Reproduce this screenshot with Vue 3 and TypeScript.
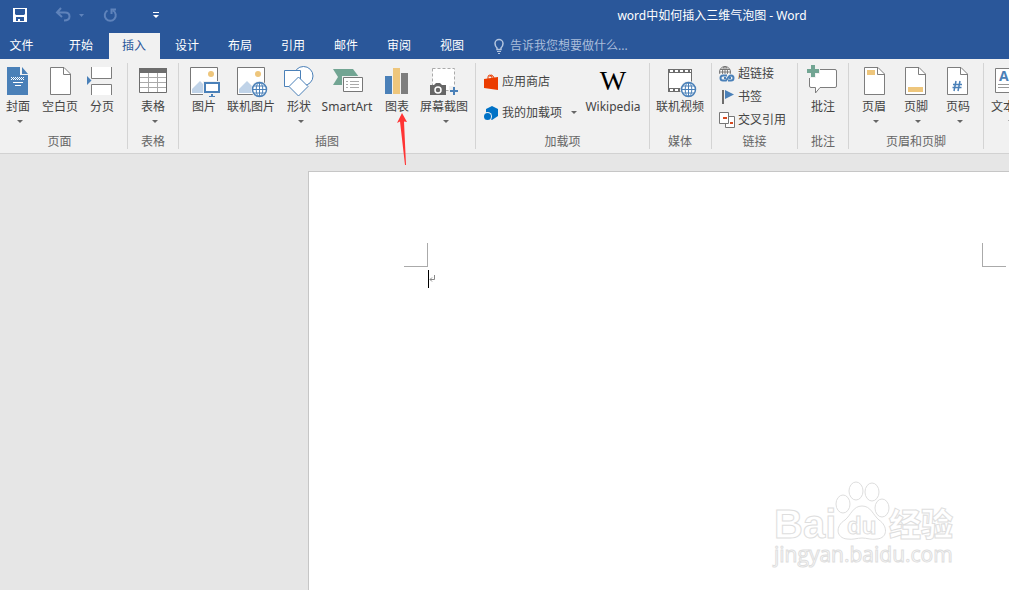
<script setup lang="ts">
import { ref } from 'vue'

interface Command {
  label: string
  icon: string
  width: number
  menu?: boolean
}
interface Group {
  label: string
  kind: string
  big: Command[]
  small: Command[]
}

const tabs: string[] = ['开始', '插入', '设计', '布局', '引用', '邮件', '审阅', '视图']
const activeTab = ref('插入')
const query = ref('')

const big = (label: string, icon: string, width: number, menu = false): Command => ({ label, icon, width, menu })

const groups: Group[] = [
  { label: '页面', kind: 'pages', big: [big('封面', 'cover', 36, true), big('空白页', 'blank', 48), big('分页', 'break', 36)], small: [] },
  { label: '表格', kind: 'single', big: [big('表格', 'table', 48, true)], small: [] },
  {
    label: '插图',
    kind: 'art',
    big: [
      big('图片', 'picture', 36),
      big('联机图片', 'online', 58),
      big('形状', 'shapes', 38, true),
      big('SmartArt', 'smartart', 58),
      big('图表', 'chart', 42),
      big('屏幕截图', 'screenshot', 52, true),
    ],
    small: [],
  },
  {
    label: '加载项',
    kind: 'addins',
    big: [big('Wikipedia', 'wiki', 64)],
    small: [big('应用商店', 'store', 0), big('我的加载项', 'addin', 0, true)],
  },
  { label: '媒体', kind: 'media', big: [big('联机视频', 'video', 58)], small: [] },
  {
    label: '链接',
    kind: 'links',
    big: [],
    small: [big('超链接', 'link', 0), big('书签', 'flag', 0), big('交叉引用', 'cross', 0)],
  },
  { label: '批注', kind: 'single', big: [big('批注', 'comment', 48)], small: [] },
  {
    label: '页眉和页脚',
    kind: 'header',
    big: [big('页眉', 'header', 42, true), big('页脚', 'footer', 42, true), big('页码', 'number', 42, true)],
    small: [],
  },
  { label: '', kind: 'text', big: [big('文本框', 'textbox', 48, true)], small: [] },
]
</script>

<template>
  <div class="app">
    <svg class="defs" aria-hidden="true">
      <defs>
        <g id="i-globe" fill="none" stroke="#4a80b8">
          <circle r="7" fill="#fff" stroke-width="1.5" />
          <ellipse rx="3.3" ry="7" />
          <path d="M0-7V7M-7 0H7M-6-3.5H6M-6 3.5H6" />
        </g>
        <g id="i-page">
          <path d="M.5.5H14L20.5 7V27.5H.5Z" fill="#fff" stroke="#7d7d7d" />
          <path d="M13.5.5V7.5H20.5" fill="none" stroke="#7d7d7d" />
        </g>
        <g id="i-photo">
          <path d="M2.500 1.500H29.500V28.500H2.500Z" fill="#fff" stroke="#777" />
          <circle cx="23" cy="8" r="3" fill="#eec67c" />
          <path d="M4 27V23L12 15L20 23V27Z" fill="#c0d3e8" />
        </g>

        <g id="i-cover">
          <path d="M5 1H18V9H26V29H5Z" fill="#4a80b8" />
          <path d="M20 1V8H26Z" fill="#4a80b8" />
          <path d="M9 11.500H22M9 13.500H22" stroke="#fff" stroke-dasharray="1 1" />
          <path d="M10 12.500H22" stroke="#fff" stroke-dasharray="1 1" />
          <path d="M11 16.500H21M13 19.500H19" stroke="#fff" />
        </g>
        <g id="i-blank"><use href="#i-page" x="6" y="1" /></g>
        <g id="i-break">
          <path d="M5 1H26V12H5ZM5 19H26V29H5Z" fill="#fff" />
          <path d="M5.500 1V12.500H25.500V1M5.500 29V18.500H25.500V29" fill="none" stroke="#7d7d7d" />
          <path d="M1 10L5.500 14.500L1 19Z" fill="#4a80b8" />
        </g>
        <g id="i-table">
          <path d="M2.500 2.500H29.500V26.500H2.500Z" fill="#fff" stroke="#6d6d6d" />
          <path d="M2 2H30V7H2Z" fill="#6d6d6d" />
          <path d="M3 11.500H29M3 16.500H29M3 21.500H29M11.500 7V26M20.500 7V26" stroke="#aaa" />
        </g>
        <g id="i-picture">
          <use href="#i-photo" />
          <path d="M15 15H33V29H15Z" fill="#f1f1f1" />
          <path d="M17 17H31V26H17Z" fill="#fff" stroke="#4a80b8" stroke-width="2" />
          <path d="M23 28H25V30H27V31H21V30H23Z" fill="#4a80b8" />
        </g>
        <g id="i-online">
          <use href="#i-photo" />
          <circle cx="24.500" cy="23.500" r="8.500" fill="#f1f1f1" />
          <use href="#i-globe" x="24.500" y="23.500" />
        </g>
        <g id="i-shapes" fill="#fff" stroke="#4a80b8">
          <circle cx="20.500" cy="10" r="9.500" />
          <path d="M1.500 4.500H17.500V20.500H1.500Z" />
          <path d="M15.500 11L25 20.500L15.500 30L6 20.500Z" />
        </g>
        <g id="i-smartart">
          <path d="M2 3H22L28 11L22 19H2L7 11Z" fill="#72a593" />
          <path d="M11 10H33V28H11Z" fill="#f1f1f1" />
          <path d="M12.500 11.500H31.500V25.500H12.500Z" fill="#fff" stroke="#777" />
          <path d="M15 15.500H17M15 18.500H17M15 21.500H17M19 15.500H28M19 18.500H28M19 21.500H28" stroke="#aaa" />
        </g>
        <g id="i-chart">
          <path d="M4 10H11V28H4Z" fill="#4a80b8" />
          <path d="M12 2H19V28H12Z" fill="#eec67c" />
          <path d="M20 7H27V28H20Z" fill="#7d7d7d" />
        </g>
        <g id="i-screenshot">
          <path d="M4.500 2.500H26.500V24.500H4.500Z" fill="#fff" stroke="#aaa" stroke-dasharray="3 2" />
          <path d="M2 19H6L8 17H12L14 19H18V29H2Z" fill="#666" />
          <circle cx="10" cy="24" r="3" fill="#666" stroke="#fff" stroke-width="1.500" />
          <path d="M21 20H31V30H21Z" fill="#f1f1f1" />
          <path d="M26 21V29M22 25H30" stroke="#4a80b8" stroke-width="2" />
        </g>
        <g id="i-wiki"><text x="16" y="24" text-anchor="middle" class="serif">W</text></g>
        <g id="i-video">
          <path d="M4 3H28V26H4Z" fill="#6d6d6d" />
          <path d="M5 7H27V22H5Z" fill="#fff" />
          <path d="M6 5H27M6 24H27" stroke="#fff" stroke-width="2" stroke-dasharray="3 2" />
          <circle cx="24.500" cy="23.500" r="8.500" fill="#f1f1f1" />
          <use href="#i-globe" x="24.500" y="23.500" />
        </g>
        <g id="i-comment">
          <path d="M4 3.500H28Q29.500 3.500 29.500 5V20Q29.500 21.500 28 21.500H13L8.500 27V21.500H4Q2.500 21.500 2.500 20V5Q2.500 3.500 4 3.500Z" fill="#fff" stroke="#7d7d7d" />
          <path d="M-1-2H13V8H9V12H-1Z" fill="#f1f1f1" />
          <path d="M4-1H8V3H12V7H8V11H4V7H0V3H4Z" fill="#72a593" />
        </g>
        <g id="i-header"><use href="#i-page" x="6" y="1" /><path d="M9 4H17V9H9Z" fill="#eec67c" /></g>
        <g id="i-footer"><use href="#i-page" x="5" y="1" /><path d="M8 21H23V26H8Z" fill="#eec67c" /></g>
        <g id="i-number">
          <use href="#i-page" x="5" y="1" />
          <path d="M14 15L12 25M18 15L16 25M11 18.500H20M10.500 21.500H19.500" fill="none" stroke="#4a80b8" stroke-width="1.500" />
        </g>
        <g id="i-textbox">
          <path d="M2.500 2.500H30V26.500H2.500Z" fill="#fff" stroke="#7d7d7d" />
          <text x="6" y="15" class="letter">A</text>
          <path d="M18 7.500H27M18 11.500H27M5 18.500H27M5 21.500H27" stroke="#999" />
        </g>

        <g id="i-store">
          <path d="M0 5L14 3V16L0 14Z" fill="#eb3c00" />
          <path d="M4 5V3Q4 1 6 1Q8 1 8 4M6 3V2Q7 0 9 2L10 4" fill="none" stroke="#eb3c00" />
        </g>
        <g id="i-addin">
          <path d="M8 1L14 4V11L8 15L2 11V4Z" fill="#0072c6" />
          <circle cx="3.500" cy="11.500" r="4.500" fill="#f1f1f1" />
          <circle cx="3.500" cy="11.500" r="3.500" fill="#0072c6" />
        </g>
        <g id="i-link">
          <g fill="none" stroke="#777"><circle cx="6" cy="6" r="5.500" fill="#fff" /><ellipse cx="6" cy="6" rx="2.500" ry="5.500" /><path d="M0 6H12M1 3.500H11M6 0V12" /></g>
          <path d="M0 8H16V16H0Z" fill="#f1f1f1" />
          <path d="M8 9.500H4Q1.500 9.500 1.500 12T4 14.500H7L10 10.500Q11 9.500 12 9.500Q14.500 9.500 14.500 12T12 14.500H9M5 12H7M10 12H12" fill="none" stroke="#4a80b8" stroke-width="2" />
        </g>
        <g id="i-flag"><path d="M3 1H5V15H3Z" fill="#6d6d6d" /><path d="M6 1L15 5.500L6 10Z" fill="#4a80b8" /></g>
        <g id="i-cross">
          <path d="M6.500 4.500H15.500V15.500H6.500Z" fill="#fff" stroke="#777" />
          <path d="M.500.500H9.500V11.500H.500Z" fill="#fff" stroke="#777" />
          <path d="M4 5H8V7H4ZM11 10H14V12H11Z" fill="#d84a20" />
        </g>
      </defs>
    </svg>

    <header class="titlebar">
      <div class="quick">
        <button class="tool save" aria-label="保存">
          <svg width="14" height="14"><path d="M0 0H14V14H0ZM2 1V6L3 7H11L12 6V1ZM3 9V13H5V11H7V13H11V9Z" fill="#fff" fill-rule="evenodd" /></svg>
        </button>
        <button class="tool undo" aria-label="撤消">
          <svg width="15" height="14"><path d="M5 0L1 4.500L6 9M1 4.500H9Q13.500 4.500 13.500 8.500T8 12.500" fill="none" stroke="#5f83bb" stroke-width="2" /></svg>
        </button>
        <button class="tool more" aria-label="撤消选项">
          <svg width="5" height="3"><path d="M0 0H5L2.500 3Z" fill="#5f83bb" /></svg>
        </button>
        <button class="tool redo" aria-label="重复">
          <svg width="14" height="14"><path d="M9.500 2.500A5.500 5.500 0 1 1 4 2.500M1 1.500H5.500V6" fill="none" stroke="#5f83bb" stroke-width="2" transform="matrix(-1 0 0 1 14 0)" /></svg>
        </button>
        <button class="tool" aria-label="自定义快速访问工具栏">
          <svg width="6" height="6"><path d="M0 0H6V1H0ZM0 3H6L3 6Z" fill="#fff" /></svg>
        </button>
      </div>
      <h1>word中如何插入三维气泡图 - Word</h1>
    </header>

    <nav class="tabs">
      <button class="tab file">文件</button>
      <button v-for="t in tabs" :key="t" class="tab" :class="{ active: t === activeTab }" @click="activeTab = t">{{ t }}</button>
      <label class="tell">
        <svg width="10" height="15" fill="none" stroke="#b4c5df">
          <path d="M3 10.500V9Q1 7 1 4.500A4 4 0 0 1 9 4.500Q9 7 7 9V10.500Z" stroke-width="1.500" />
          <path d="M3 12.500H7M4 14.500H6" />
        </svg>
        <input v-model="query" type="text" placeholder="告诉我您想要做什么..." aria-label="告诉我您想要做什么" />
      </label>
    </nav>

    <section class="ribbon">
      <div v-for="(g, i) in groups" :key="i" class="group" :class="g.kind">
        <div class="commands">
          <div v-if="g.small.length" class="stack">
            <button v-for="c in g.small" :key="c.label" class="small">
              <svg width="16" height="16"><use :href="'#i-' + c.icon" /></svg>
              <span>{{ c.label }}</span>
              <i v-if="c.menu" class="caret"></i>
            </button>
          </div>
          <button v-for="c in g.big" :key="c.label" class="big" :style="{ width: c.width + 'px' }">
            <svg width="32" height="32"><use :href="'#i-' + c.icon" /></svg>
            <span>{{ c.label }}</span>
            <i v-if="c.menu" class="caret"></i>
          </button>
        </div>
        <div class="caption">{{ g.label }}</div>
      </div>
      <svg class="pointer" width="12" height="54" aria-hidden="true">
        <path d="M5 0L10 9L7 8.500L9 52L8 52L3 8.500L0 10Z" fill="#ff3434" />
      </svg>
    </section>

    <main class="workspace">
      <article class="sheet">
        <div class="margins"><i class="corner left"></i><i class="corner right"></i></div>
        <div class="line">
          <i class="cursor"></i>
          <svg width="6" height="8"><path d="M5.500 0V4.500H1M3 2.500L1 4.500L3 6.500" fill="none" stroke="#888" /></svg>
        </div>
      </article>
      <svg class="watermark" width="190" height="92" aria-label="Baidu经验">
        <g class="outline">
          <text x="5" y="58" class="latin">Bai</text>
          <ellipse cx="74" cy="24" rx="7" ry="9" />
          <ellipse cx="87" cy="11" rx="7" ry="9" />
          <ellipse cx="103" cy="12" rx="7" ry="9" />
          <ellipse cx="113" cy="28" rx="7" ry="9" />
          <path d="M93 26C84 26 82 35 76 40C66 46 67 58 78 59C84 60 88 58 93 58S102 60 108 59C119 58 119 46 110 40C104 35 102 26 93 26Z" />
          <text x="78" y="54" class="du">du</text>
          <text x="120" y="56" class="cjk">经验</text>
          <text x="5" y="82" class="site">jingyan.baidu.com</text>
        </g>
      </svg>
    </main>
  </div>
</template>

<style>
html,
body {
  margin: 0;
  overflow: hidden;
}
</style>

<style scoped>
.app {
  display: flex;
  flex-direction: column;
  height: 100vh;
  overflow: hidden;
  background: #e6e6e6;
  color: #444;
  font: 12px/16px "Noto Sans", "Noto Sans CJK SC", sans-serif;
}
.defs {
  position: absolute;
  width: 0;
  height: 0;
}
button,
input {
  font: inherit;
  color: inherit;
  background: none;
  border: 0;
  padding: 0;
  margin: 0;
}
svg {
  display: block;
  flex: none;
  overflow: visible;
}
.titlebar {
  display: flex;
  align-items: center;
  height: 33px;
  background: #2a579a;
  color: #fff;
}
.quick {
  display: flex;
  align-items: center;
  box-sizing: border-box;
  width: 415px;
  padding: 0 0 3px 13px;
}
.save {
  margin-right: 29px;
}
.undo {
  margin-right: 8px;
}
.more {
  margin-right: 19px;
}
.redo {
  margin-right: 36px;
}
h1 {
  flex: 1;
  margin: 0;
  padding-bottom: 2px;
  font-size: 12px;
  font-weight: 400;
  text-align: center;
}
.tabs {
  display: flex;
  gap: 2px;
  height: 26px;
  background: #2a579a;
  color: #fff;
}
.tab {
  width: 51px;
  padding: 0 1px 1px 0;
}
.file {
  width: 44px;
  margin-right: 10px;
}
.active {
  background: #f1f1f1;
  color: #2a579a;
}
.tell {
  display: flex;
  align-items: center;
  gap: 6px;
  margin-left: 14px;
  flex: 1;
}
.tell input {
  flex: 1;
  min-width: 0;
  outline: none;
}
.tell input::placeholder {
  color: #a9bddb;
  opacity: 1;
}
.ribbon {
  position: relative;
  display: flex;
  height: 94px;
  background: #f1f1f1;
  border-bottom: 1px solid #d2d2d2;
}
.group {
  position: relative;
  display: flex;
  flex: none;
  flex-direction: column;
  justify-content: space-between;
  box-sizing: border-box;
  margin: 4px 0;
  border-right: 1px solid #d4d4d4;
}
.commands {
  display: flex;
  padding-top: 3px;
}
.pages {
  width: 128px;
}
.pages .caption {
  padding-right: 8px;
}
.single {
  width: 51px;
}
.single .commands,
.media .commands {
  justify-content: center;
}
.art {
  width: 297px;
}
.art .commands {
  padding-left: 7px;
}
.addins {
  width: 174px;
}
.media {
  width: 62px;
  padding-right: 1px;
}
.links {
  width: 86px;
}
.header {
  width: 135px;
}
.header .commands {
  padding-left: 4px;
}
.text {
  border-right: 0;
}
.caption {
  height: 15px;
  text-align: center;
  color: #666;
}
.big {
  display: flex;
  flex: none;
  flex-direction: column;
  align-items: center;
  white-space: nowrap;
}
.big span {
  margin-top: 1px;
}
.text .big {
  margin-left: 1px;
}
.big .caret {
  margin: 5px 0 0 3px;
}
.caret {
  border: 3px solid transparent;
  border-top-color: #666;
  border-bottom: 0;
}
.stack {
  display: flex;
  flex-direction: column;
}
.small {
  display: flex;
  align-items: center;
  white-space: nowrap;
}
.small span {
  padding-top: 1px;
}
.addins .stack {
  gap: 14px;
  width: 105px;
  padding: 7px 0 0 8px;
  box-sizing: border-box;
}
.addins .small {
  gap: 2px;
}
.addins .small .caret {
  margin-left: 7px;
}
.links .commands {
  padding: 0 0 0 7px;
}
.links .stack {
  gap: 6px;
  padding-top: 2px;
}
.links .small {
  gap: 3px;
}
.serif {
  font: 28px "Liberation Serif", serif;
  fill: #000;
}
.letter {
  font: 700 14px "Open Sans", sans-serif;
  fill: #4a80b8;
}
.pointer {
  position: absolute;
  left: 397px;
  top: 54px;
  z-index: 2;
}
.workspace {
  position: relative;
  display: flex;
  flex: 1;
  min-height: 0;
  padding: 17px 0 0 308px;
}
.sheet {
  flex: 1;
  padding: 71px 3px 0 95px;
  border: 1px solid #c6c6c6;
  border-width: 1px 0 0 1px;
  background: #fff;
}
.margins {
  display: flex;
  justify-content: space-between;
}
.corner {
  width: 23px;
  height: 23px;
  border: 0 solid #aaa;
  border-bottom-width: 1px;
}
.left {
  border-right-width: 1px;
}
.right {
  border-left-width: 1px;
}
.line {
  display: flex;
  align-items: center;
  margin: 3px 0 0 24px;
}
.cursor {
  width: 1px;
  height: 18px;
  background: #000;
}
.watermark {
  position: absolute;
  right: 50px;
  bottom: 18px;
}
.outline {
  fill: #fff;
  stroke: #dedede;
  stroke-width: 1px;
}
.latin {
  font: 700 40px "Liberation Sans", sans-serif;
}
.du {
  font: 700 24px "Liberation Sans", sans-serif;
}
.cjk {
  font: 900 32px "Noto Sans CJK SC", sans-serif;
}
.site {
  font: 21px "Open Sans", sans-serif;
}
</style>
